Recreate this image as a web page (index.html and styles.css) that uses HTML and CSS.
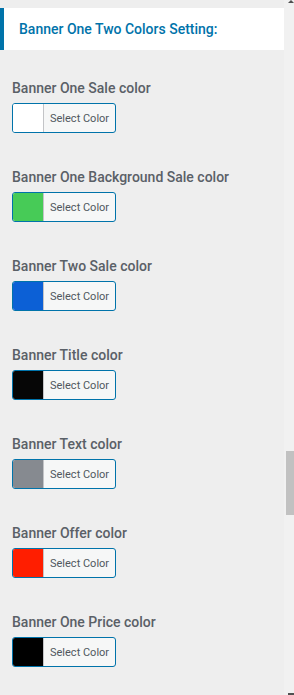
FILE: index.html
```html
<!DOCTYPE html>
<html lang="en">
<head>
  <meta charset="UTF-8">
  <meta name="viewport" content="width=device-width, initial-scale=1.0">
  <title>Banner Colors</title>
  <link rel="stylesheet" href="styles.css">
</head>
<body>
  <div class="page">
    <div class="panel">
      <div class="section-title">Banner One Two Colors Setting:</div>

      <div class="fields">
        <div class="field">
          <label class="field-label">Banner One Sale color</label>
          <button class="color-button"><span class="swatch" style="background-color: #ffffff"></span><span class="button-text">Select Color</span></button>
        </div>
        <div class="field">
          <label class="field-label">Banner One Background Sale color</label>
          <button class="color-button"><span class="swatch" style="background-color: #47cb57"></span><span class="button-text">Select Color</span></button>
        </div>
        <div class="field">
          <label class="field-label">Banner Two Sale color</label>
          <button class="color-button"><span class="swatch" style="background-color: #0c60d6"></span><span class="button-text">Select Color</span></button>
        </div>
        <div class="field">
          <label class="field-label">Banner Title color</label>
          <button class="color-button"><span class="swatch" style="background-color: #060606"></span><span class="button-text">Select Color</span></button>
        </div>
        <div class="field">
          <label class="field-label">Banner Text color</label>
          <button class="color-button"><span class="swatch" style="background-color: #868a90"></span><span class="button-text">Select Color</span></button>
        </div>
        <div class="field">
          <label class="field-label">Banner Offer color</label>
          <button class="color-button"><span class="swatch" style="background-color: #ff1e00"></span><span class="button-text">Select Color</span></button>
        </div>
        <div class="field">
          <label class="field-label">Banner One Price color</label>
          <button class="color-button"><span class="swatch" style="background-color: #000000"></span><span class="button-text">Select Color</span></button>
        </div>
      </div>
    </div>

    <div class="scrollbar">
      <div class="scroll-arrow-up"></div>
      <div class="scroll-thumb"></div>
      <div class="scroll-arrow-down"></div>
    </div>
  </div>
</body>
</html>
```

FILE: styles.css
```css
html, body {
  margin: 0;
  height: 695px;
  overflow: hidden;
}
body {
  font-family: Roboto, "Liberation Sans", Arial, sans-serif;
  background-color: #eeeeee;
}
.page {
  display: flex;
  height: 695px;
}
.panel {
  width: 284px;
  flex: none;
}
.section-title {
  margin-top: 8px;
  height: 42px;
  box-sizing: border-box;
  border-left: 4px solid #0073aa;
  background-color: #fff;
  padding-left: 15px;
  padding-bottom: 1px;
  display: flex;
  align-items: center;
  font-size: 14px;
  font-weight: 500;
  color: #0073aa;
}
.fields {
  margin-top: 28px;
}
.field {
  height: 89px;
  box-sizing: border-box;
  padding-left: 12px;
  display: flex;
  flex-direction: column;
  align-items: flex-start;
}
.field-label {
  display: block;
  font-size: 14px;
  line-height: 20px;
  font-weight: 500;
  color: #5a6067;
  margin-bottom: 5px;
}
.color-button {
  display: flex;
  align-items: stretch;
  width: 104px;
  height: 30px;
  padding: 0;
  box-sizing: border-box;
  border: 1px solid #0073aa;
  border-radius: 3px;
  background-color: #f6f7f7;
  overflow: hidden;
  cursor: pointer;
  font-family: inherit;
}
.swatch {
  width: 30px;
  flex: none;
  border-right: 1px solid #c3c4c7;
}
.button-text {
  display: flex;
  align-items: center;
  padding-left: 6px;
  font-size: 11px;
  color: #50575e;
}
.scrollbar {
  width: 10px;
  flex: none;
  background-color: #f1f1f1;
  position: relative;
}
.scroll-thumb {
  margin-top: 451px;
  margin-left: 2px;
  width: 8px;
  height: 64px;
  background-color: #c1c1c1;
}
.scroll-arrow-up {
  position: absolute;
  top: 0;
  left: 4px;
  width: 0;
  height: 0;
  border-left: 3px solid transparent;
  border-right: 3px solid transparent;
  border-bottom: 3px solid #505050;
}
.scroll-arrow-down {
  position: absolute;
  bottom: 0;
  left: 4px;
  width: 6px;
  height: 2px;
  background-color: #505050;
}
```
